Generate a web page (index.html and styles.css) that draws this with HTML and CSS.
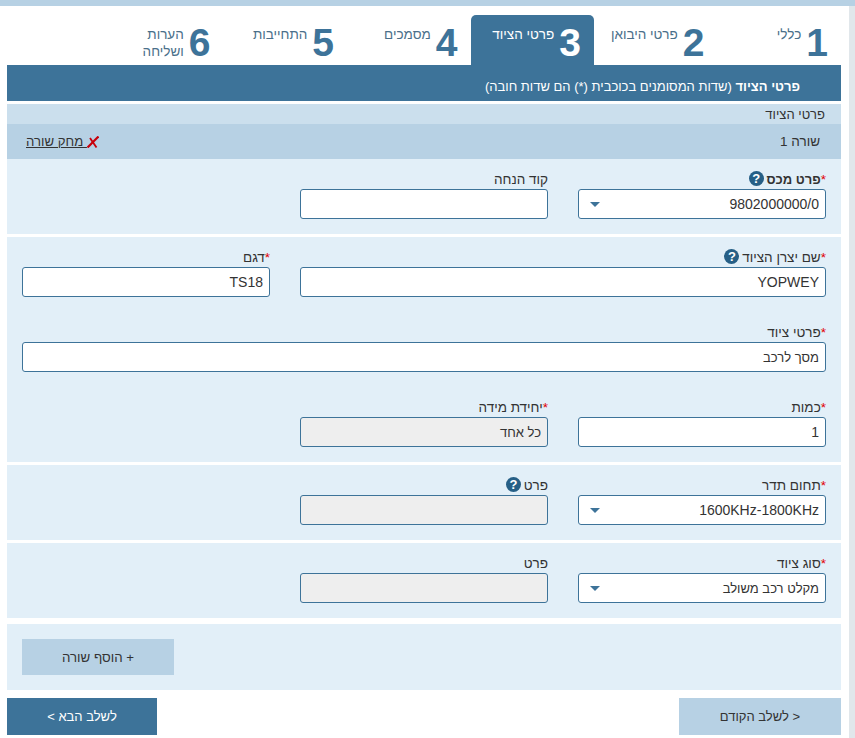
FILE: index.html
```html
<!DOCTYPE html>
<html lang="he" dir="rtl">
<head>
    <meta charset="UTF-8">
    <title>פרטי הציוד</title>
    <link rel="stylesheet" href="styles.css">
</head>
<body>
    <div class="top-bar"></div>
    <div class="page">
        <div class="scroll-strip"></div>
        <div class="main">
            <div class="tabs">
                <div class="tab"><span class="num">1</span><span class="tab-text">כללי</span></div>
                <div class="tab"><span class="num">2</span><span class="tab-text">פרטי היבואן</span></div>
                <div class="tab active"><span class="num">3</span><span class="tab-text">פרטי הציוד</span></div>
                <div class="tab"><span class="num">4</span><span class="tab-text">מסמכים</span></div>
                <div class="tab"><span class="num">5</span><span class="tab-text">התחייבות</span></div>
                <div class="tab"><span class="num">6</span><span class="tab-text">הערות ושליחה</span></div>
            </div>
            <div class="header"><b>פרטי הציוד</b> (שדות המסומנים בכוכבית (*) הם שדות חובה)</div>
            <div class="subheader">פרטי הציוד</div>
            <div class="row-head">
                <span>שורה 1</span>
                <a class="delete" href="#">
                    <svg width="12" height="12" viewBox="0 0 12 12"><path d="M3 2 L9.5 11.5" stroke="#c8000a" stroke-width="1.8" fill="none"/><path d="M0.5 11.5 L11.5 0.5" stroke="#c8000a" stroke-width="2.2" fill="none"/></svg>
                    <span>&nbsp;מחק שורה</span>
                </a>
            </div>

            <div class="section">
                <div class="field">
                    <label><i>*</i><b>פרט מכס</b> <span class="help">?</span></label>
                    <div class="select-wrap"><select><option>9802000000/0</option></select></div>
                </div>
                <div class="field">
                    <label>קוד הנחה</label>
                    <input type="text">
                </div>
            </div>

            <div class="section">
                <div class="field wide">
                    <label><i>*</i>שם יצרן הציוד <span class="help">?</span></label>
                    <input type="text" value="YOPWEY">
                </div>
                <div class="field">
                    <label><i>*</i>דגם</label>
                    <input type="text" value="TS18">
                </div>
                <div class="field full">
                    <label><i>*</i>פרטי ציוד</label>
                    <input type="text" class="he" value="מסך לרכב">
                </div>
                <div class="field">
                    <label><i>*</i>כמות</label>
                    <input type="text" value="1">
                </div>
                <div class="field">
                    <label><i>*</i>יחידת מידה</label>
                    <input type="text" class="he" value="כל אחד" disabled>
                </div>
            </div>

            <div class="section">
                <div class="field">
                    <label><i>*</i>תחום תדר</label>
                    <div class="select-wrap"><select><option>1600KHz-1800KHz</option></select></div>
                </div>
                <div class="field">
                    <label>פרט <span class="help">?</span></label>
                    <input type="text" disabled>
                </div>
            </div>

            <div class="section">
                <div class="field">
                    <label><i>*</i>סוג ציוד</label>
                    <div class="select-wrap"><select class="he"><option>מקלט רכב משולב</option></select></div>
                </div>
                <div class="field">
                    <label>פרט</label>
                    <input type="text" disabled>
                </div>
            </div>

            <div class="add-section">
                <button class="add-btn">+ הוסף שורה</button>
            </div>

            <div class="nav">
                <button class="prev">&lt; לשלב הקודם</button>
                <button class="next">לשלב הבא &gt;</button>
            </div>
        </div>
    </div>
</body>
</html>
```
FILE: styles.css
```css
* {
    box-sizing: border-box;
    margin: 0;
    padding: 0;
}
html, body {
    height: 100%;
    overflow: hidden;
}
body {
    font-family: "Liberation Sans", Arial, sans-serif;
    font-size: 14px;
    color: #333;
    background-color: white;
}
.top-bar {
    height: 6px;
    background-color: #b7d1e4;
}
.page {
    display: flex;
    height: 732px;
}
.scroll-strip {
    width: 6px;
    background-color: #e1e7eb;
}
.main {
    width: 834px;
    margin-right: 8px;
}
.tabs {
    display: flex;
    height: 59px;
    padding-top: 9px;
}
.tab {
    width: 123.5px;
    height: 50px;
    display: flex;
    align-items: flex-start;
    padding: 7px 13px 0 0;
    color: #4a6f8a;
}
.tab.active {
    background-color: #3d7399;
    color: white;
    border-radius: 5px 5px 0 0;
}
.num {
    font-size: 39px;
    font-weight: bold;
    line-height: 42px;
    color: #3d7399;
    margin-left: 5px;
}
.active .num {
    color: white;
}
.tab-text {
    font-size: 13.5px;
    line-height: 17px;
    margin-top: 4px;
    width: 60px;
}
.tab:nth-child(2) .tab-text,
.tab:nth-child(3) .tab-text,
.tab:nth-child(5) .tab-text {
    white-space: nowrap;
}
.header {
    height: 36px;
    line-height: 44px;
    padding-right: 41px;
    font-size: 13px;
    color: white;
    background-color: #3d7399;
    margin-bottom: 3px;
}
.subheader {
    height: 20px;
    line-height: 21px;
    padding-right: 16px;
    font-size: 13px;
    background-color: #cbdfed;
}
.row-head {
    height: 35px;
    display: flex;
    justify-content: space-between;
    align-items: center;
    padding: 0 21px 0 19px;
    font-size: 13.5px;
    background-color: #b7d1e4;
}
.delete {
    display: flex;
    align-items: center;
    font-size: 13.2px;
    color: #333;
}
.section {
    display: grid;
    grid-template-columns: 248px 248px 248px;
    column-gap: 30px;
    padding: 0 15px;
    background-color: #e2eff8;
    margin-bottom: 3px;
}
.field {
    height: 75px;
    padding-top: 11px;
}
.field.wide {
    grid-column: 1 / 3;
}
.field.full {
    grid-column: 1 / 4;
}
label {
    display: block;
    height: 19px;
    line-height: 19px;
    font-size: 13.5px;
}
label b {
    font-size: 13px;
}
label i {
    color: #e00000;
    font-style: normal;
}
.help {
    display: inline-block;
    width: 15px;
    height: 15px;
    line-height: 15px;
    border-radius: 50%;
    background-color: #265f86;
    color: white;
    font-size: 13px;
    font-weight: bold;
    text-align: center;
    vertical-align: 1px;
    margin-right: -1px;
}
input, select {
    display: block;
    width: 100%;
    height: 30px;
    padding: 0 6px;
    font-family: inherit;
    font-size: 14px;
    color: #333;
    background-color: white;
    border: 1px solid #3d7399;
    border-radius: 3px;
    appearance: none;
}
input.he, select.he {
    font-size: 13px;
}
input:disabled {
    background-color: #eee;
}
.select-wrap {
    position: relative;
}
.select-wrap::after {
    content: "";
    position: absolute;
    left: 12px;
    top: 13px;
    border-top: 5px solid #3d7399;
    border-left: 5px solid transparent;
    border-right: 5px solid transparent;
}
.add-section {
    height: 66px;
    margin-top: 6px;
    padding: 15px;
    background-color: #e2eff8;
}
.add-btn {
    display: block;
    width: 152px;
    height: 36px;
    font-family: inherit;
    font-size: 13.3px;
    color: #333;
    background-color: #b7d1e4;
    border: none;
    margin-right: auto;
}
.nav {
    display: flex;
    justify-content: space-between;
    margin-top: 8px;
}
.nav button {
    height: 37px;
    font-family: inherit;
    font-size: 13px;
    border: none;
}
.prev {
    width: 162px;
    color: #333;
    background-color: #b7d1e4;
}
.next {
    width: 150px;
    color: white;
    background-color: #3d7399;
}
```
